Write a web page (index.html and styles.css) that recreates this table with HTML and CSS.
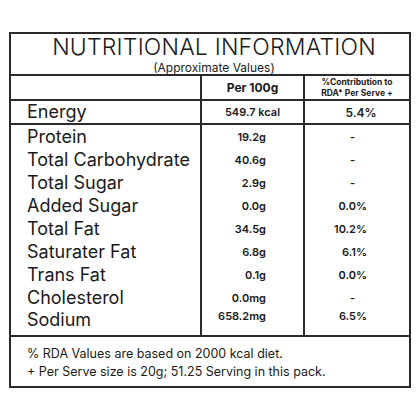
FILE: index.html
```html
<!DOCTYPE html>
<html lang="en">
<head>
    <meta charset="UTF-8">
    <meta name="viewport" content="width=device-width, initial-scale=1.0">
    <title>Nutritional Information</title>
    <link rel="stylesheet" href="styles.css">
</head>
<body>
    <div class="panel">
        <div class="panel-head">
            <h1>NUTRITIONAL INFORMATION</h1>
            <div class="subtitle">(Approximate Values)</div>
        </div>

        <table class="facts">
            <colgroup>
                <col class="col-name">
                <col class="col-value">
                <col class="col-rda">
            </colgroup>
            <thead>
                <tr class="head-row">
                    <th></th>
                    <th class="per">Per 100g</th>
                    <th class="rda-head">%Contribution to<br>RDA* Per Serve +</th>
                </tr>
            </thead>
            <tbody class="energy">
                <tr>
                    <td class="name">Energy</td>
                    <td class="value center">549.7 kcal</td>
                    <td class="rda center">5.4%</td>
                </tr>
            </tbody>
            <tbody class="nutrients">
                <tr><td class="name">Protein</td><td class="value">19.2g</td><td class="rda dash">-</td></tr>
                <tr><td class="name">Total Carbohydrate</td><td class="value">40.6g</td><td class="rda dash">-</td></tr>
                <tr><td class="name">Total Sugar</td><td class="value">2.9g</td><td class="rda dash">-</td></tr>
                <tr><td class="name">Added Sugar</td><td class="value">0.0g</td><td class="rda">0.0%</td></tr>
                <tr><td class="name">Total Fat</td><td class="value">34.5g</td><td class="rda">10.2%</td></tr>
                <tr><td class="name">Saturater Fat</td><td class="value">6.8g</td><td class="rda">6.1%</td></tr>
                <tr><td class="name">Trans Fat</td><td class="value">0.1g</td><td class="rda">0.0%</td></tr>
                <tr><td class="name">Cholesterol</td><td class="value">0.0mg</td><td class="rda dash">-</td></tr>
                <tr class="last"><td class="name">Sodium</td><td class="value">658.2mg</td><td class="rda">6.5%</td></tr>
            </tbody>
        </table>

        <div class="notes">
            <p>% RDA Values are based on 2000 kcal diet.</p>
            <p>+ Per Serve size is 20g; 51.25 Serving in this pack.</p>
        </div>
    </div>
</body>
</html>
```

FILE: styles.css
```css
* {
    margin: 0;
    padding: 0;
    box-sizing: border-box;
}

body {
    font-family: 'Inter', 'Roboto', sans-serif;
    background: #fff;
    color: #1a1a1a;
    padding: 32px 9px 0 9px;
}

.panel {
    width: 402px;
    border: 2px solid #2a2a2a;
}

.panel-head {
    text-align: center;
    height: 42px;
    padding-left: 8px;
    border-bottom: 2px solid #2a2a2a;
}

h1 {
    font-size: 23px;
    font-weight: 300;
    line-height: 27px;
    letter-spacing: 0.2px;
}

.subtitle {
    font-size: 12px;
    line-height: 13px;
}

.facts {
    width: 100%;
    border-collapse: collapse;
    table-layout: fixed;
}

.col-name { width: 190px; }
.col-value { width: 103px; }
.col-rda { width: auto; }

.facts td + td,
.facts th + th {
    border-left: 2px solid #2a2a2a;
}

.head-row th {
    height: 24px;
    border-bottom: 2px solid #2a2a2a;
    font-weight: 700;
    text-align: center;
}

.per {
    font-size: 12px;
}

.rda-head {
    font-size: 8.5px;
    line-height: 10.5px;
    font-weight: 600;
}

.energy td {
    height: 23px;
    border-bottom: 2px solid #2a2a2a;
}

.name {
    font-size: 18px;
    font-weight: 400;
    padding-left: 16px;
    line-height: 22px;
}

.value,
.rda {
    font-size: 11px;
    font-weight: 600;
    text-align: right;
}

.value {
    padding-right: 37px;
}

.rda {
    padding-right: 42px;
}

.center {
    text-align: center;
    padding-right: 0;
}

.energy .rda {
    font-size: 12px;
    padding-left: 8px;
}

.nutrients td {
    height: 23px;
}

.nutrients tr:first-child td {
    padding-top: 1px;
}

.nutrients .last td {
    height: 26px;
    vertical-align: top;
}

.rda.dash {
    padding-right: 54px;
}

.notes {
    border-top: 2px solid #2a2a2a;
    padding: 8px 16px 5px 16px;
    font-size: 12.5px;
    line-height: 18px;
}
```
